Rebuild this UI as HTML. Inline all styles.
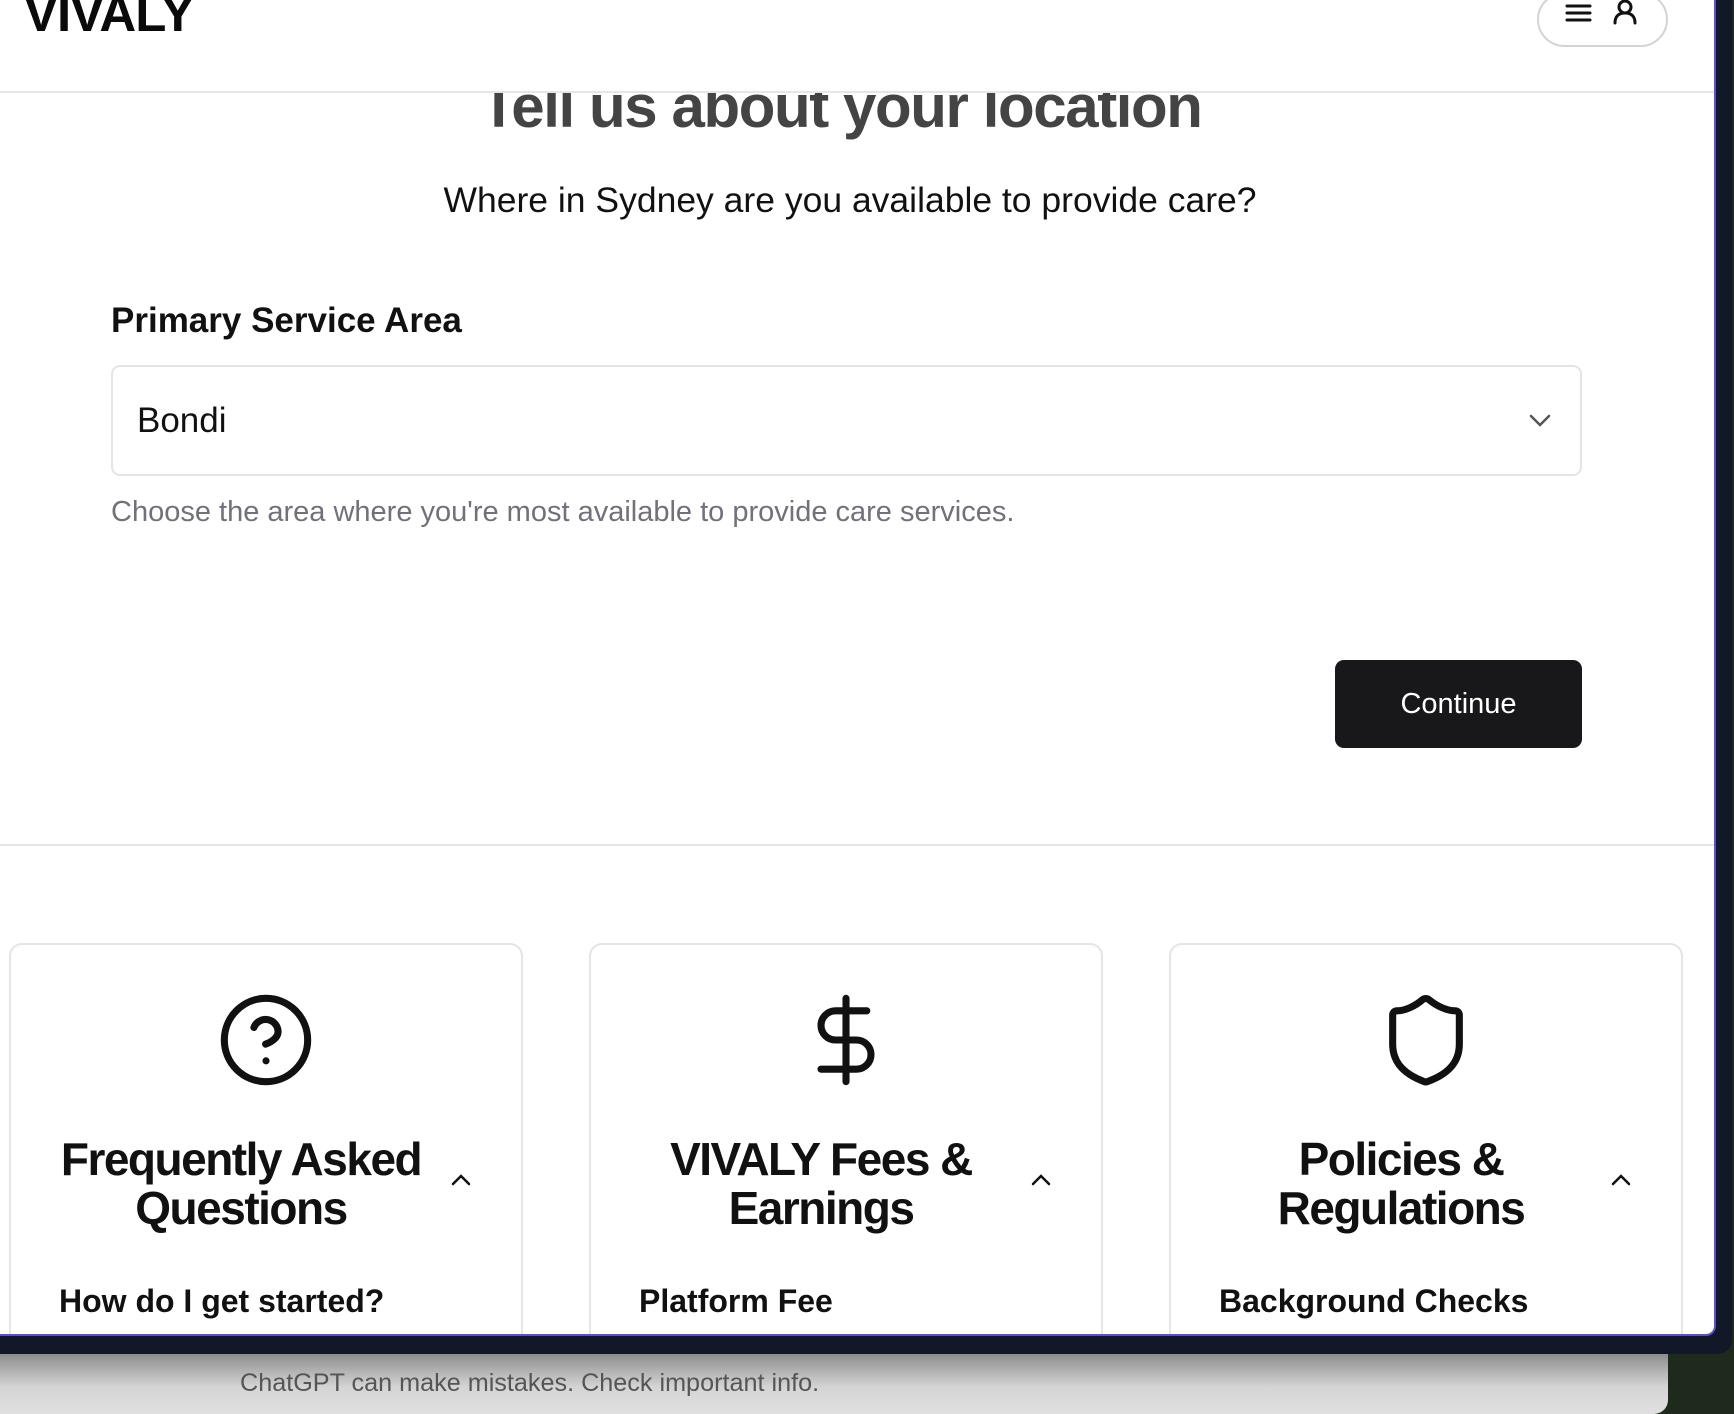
<!DOCTYPE html>
<html><head><meta charset="utf-8"><style>
*{margin:0;padding:0;box-sizing:border-box}
body{width:1734px;height:1414px;overflow:hidden;position:relative;background:#1d2a1c;font-family:"Liberation Sans",sans-serif;color:#111}
.win{position:absolute;left:0;top:0;width:1732px;height:1354px;background:#111827;border-bottom-right-radius:14px}
.page{position:absolute;left:0;top:0;width:1716px;height:1336px;background:#fff;border-right:2px solid #5b4fd6;border-bottom:2px solid #5b4fd6;border-bottom-right-radius:10px;overflow:hidden}
.hdr{position:absolute;left:0;top:0;width:100%;height:93px;border-bottom:2px solid #e5e5ea;background:#fff;z-index:2}
.logo{position:absolute;left:24px;top:-16px;font-size:51px;font-weight:bold;letter-spacing:-1px;color:#0a0a0a}
.pill{position:absolute;left:1537px;top:-8px;width:131px;height:55px;border:2px solid #d4d4d8;border-radius:28px}
.title{position:absolute;left:-16px;width:1714px;top:72px;text-align:center;font-size:60px;font-weight:bold;color:#444;letter-spacing:-1.4px;z-index:1}
.sub{position:absolute;left:0;width:1700px;top:180px;text-align:center;font-size:35.5px;color:#111}
.lbl{position:absolute;left:111px;top:301px;font-size:35px;font-weight:bold}
.sel{position:absolute;left:111px;top:365px;width:1471px;height:111px;border:2px solid #e4e4e7;border-radius:9px}
.sel span{position:absolute;left:24px;top:34px;font-size:35px}
.help{position:absolute;left:111px;top:496px;font-size:29px;color:#71717a}
.btn{position:absolute;left:1335px;top:660px;width:247px;height:88px;background:#18181b;border-radius:9px;color:#fff;font-size:29px;text-align:center;line-height:88px}
.div{position:absolute;left:0;top:844px;width:100%;height:2px;background:#e5e5ea}
.card{position:absolute;top:943px;width:514px;height:500px;border:2px solid #e5e5e5;border-radius:13px;background:#fff}
.card svg.ic{position:absolute;left:205px;top:45px}
.card h3{position:absolute;left:30px;width:400px;top:190px;text-align:center;font-size:46px;line-height:49px;letter-spacing:-1.5px;font-weight:bold}
.card .chev{position:absolute;left:439px;top:228px}
.card .q{position:absolute;left:48px;top:338px;font-size:32px;font-weight:bold}
.foot{position:absolute;left:0;top:1354px;width:1668px;height:60px;background:linear-gradient(#8e8e8e,#d4d4d4 55%,#e0e0e0);border-bottom-right-radius:14px}
.foot span{position:absolute;left:240px;top:15px;font-size:25.2px;color:#555}
</style></head><body>
<div class="win"></div>
<div class="page">
 <div class="hdr">
  <div class="logo">VIVALY</div>
  <div class="pill">
   <svg width="131" height="55" style="position:absolute;left:-2px;top:-2px"><g stroke="#111" stroke-width="3" fill="none" stroke-linecap="round"><path d="M30 14h23M30 21h23M30 28h23"/><circle cx="88" cy="15" r="6"/><path d="M78 31c0-7 4-10 10-10s10 3 10 10"/></g></svg>
  </div>
 </div>
 <div class="title">Tell us about your location</div>
 <div class="sub">Where in Sydney are you available to provide care?</div>
 <div class="lbl">Primary Service Area</div>
 <div class="sel"><span>Bondi</span>
  <svg width="24" height="16" style="position:absolute;left:1415px;top:45px"><path d="M3 4l9 9 9-9" stroke="#555" stroke-width="2.5" fill="none" stroke-linecap="round"/></svg></div>
 <div class="help">Choose the area where you're most available to provide care services.</div>
 <div class="btn">Continue</div>
 <div class="div"></div>
 <div class="card" style="left:9px">
  <svg class="ic" width="100" height="100" viewBox="0 0 24 24" fill="none" stroke="#111" stroke-width="1.7" stroke-linecap="round"><circle cx="12" cy="12" r="10"/><path d="M9.1 9a3 3 0 0 1 5.8 1c0 2-3 3-3 3"/><path d="M12 17h.01"/></svg>
  <h3>Frequently Asked Questions</h3>
  <svg class="chev" width="22" height="14"><path d="M3 11l8-8 8 8" stroke="#111" stroke-width="2.5" fill="none" stroke-linecap="round"/></svg>
  <div class="q">How do I get started?</div>
 </div>
 <div class="card" style="left:589px">
  <svg class="ic" width="100" height="100" viewBox="0 0 24 24" fill="none" stroke="#111" stroke-width="1.7" stroke-linecap="round"><path d="M12 2v20"/><path d="M17 5H9.5a3.5 3.5 0 0 0 0 7h5a3.5 3.5 0 0 1 0 7H6"/></svg>
  <h3>VIVALY Fees &amp; Earnings</h3>
  <svg class="chev" width="22" height="14"><path d="M3 11l8-8 8 8" stroke="#111" stroke-width="2.5" fill="none" stroke-linecap="round"/></svg>
  <div class="q">Platform Fee</div>
 </div>
 <div class="card" style="left:1169px">
  <svg class="ic" width="100" height="100" viewBox="0 0 24 24" fill="none" stroke="#111" stroke-width="1.7" stroke-linejoin="round"><path d="M20 13c0 5-3.5 7.5-7.7 9a1 1 0 0 1-.7 0C7.5 20.5 4 18 4 13V6a1 1 0 0 1 1-1c2 0 4.5-1.2 6.2-2.7a1.2 1.2 0 0 1 1.5 0C14.5 3.8 17 5 19 5a1 1 0 0 1 1 1z"/></svg>
  <h3>Policies &amp; Regulations</h3>
  <svg class="chev" width="22" height="14"><path d="M3 11l8-8 8 8" stroke="#111" stroke-width="2.5" fill="none" stroke-linecap="round"/></svg>
  <div class="q">Background Checks</div>
 </div>
</div>
<div class="foot"><span>ChatGPT can make mistakes. Check important info.</span></div>
</body></html>
